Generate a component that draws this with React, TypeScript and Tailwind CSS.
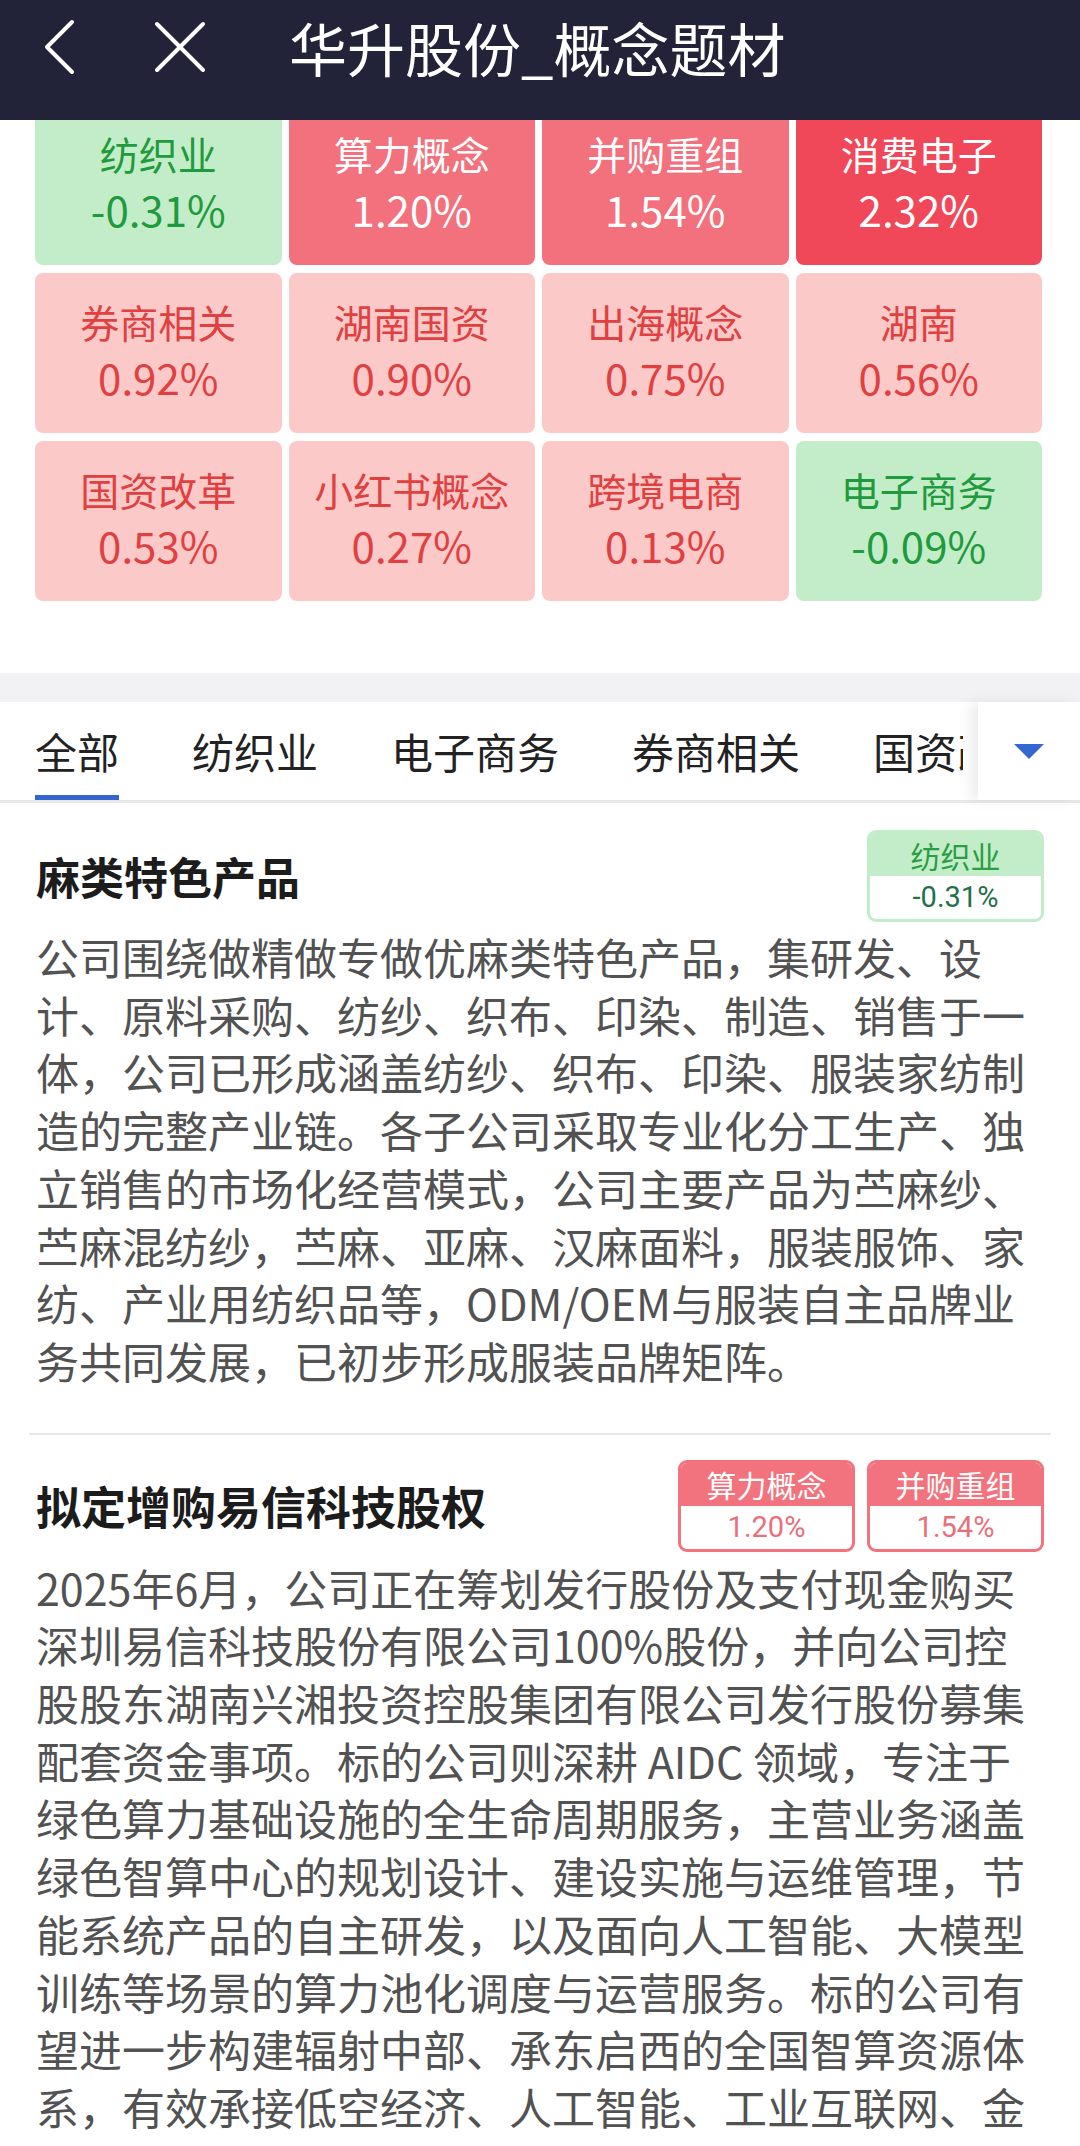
import React from "react";

type Kind = "g" | "m" | "s" | "l";

const tileStyle: Record<Kind, string> = {
  g: "bg-[#c2edc8] text-[#1f9a3c]",
  m: "bg-[#f2717d] text-white",
  s: "bg-[#f04858] text-white",
  l: "bg-[#fcc9c9] text-[#e0403f]",
};

const tiles: { n: string; p: string; k: Kind }[] = [
  { n: "纺织业", p: "-0.31%", k: "g" },
  { n: "算力概念", p: "1.20%", k: "m" },
  { n: "并购重组", p: "1.54%", k: "m" },
  { n: "消费电子", p: "2.32%", k: "s" },
  { n: "券商相关", p: "0.92%", k: "l" },
  { n: "湖南国资", p: "0.90%", k: "l" },
  { n: "出海概念", p: "0.75%", k: "l" },
  { n: "湖南", p: "0.56%", k: "l" },
  { n: "国资改革", p: "0.53%", k: "l" },
  { n: "小红书概念", p: "0.27%", k: "l" },
  { n: "跨境电商", p: "0.13%", k: "l" },
  { n: "电子商务", p: "-0.09%", k: "g" },
];

const tabs = ["全部", "纺织业", "电子商务", "券商相关", "国资改革", "湖南国资", "出海概念"];

function Badge({ n, p, green }: { n: string; p: string; green?: boolean }) {
  return (
    <div
      className={
        green
          ? "flex h-[92px] w-[177px] flex-col overflow-hidden rounded-[9px] border-[3px] border-[#c2edc8] bg-white"
          : "flex h-[92px] w-[177px] flex-col overflow-hidden rounded-[9px] border-[3px] border-[#f2737e] bg-white"
      }
    >
      <div
        className={
          green
            ? "flex h-[43px] items-center justify-center bg-[#c2edc8] text-[30px] leading-none text-[#2a9d45]"
            : "flex h-[43px] items-center justify-center bg-[#f2737e] text-[30px] leading-none text-white"
        }
      >
        {n}
      </div>
      <div
        className={
          green
            ? "flex flex-1 items-center justify-center font-['Roboto',sans-serif] text-[29px] leading-none text-[#236f4b]"
            : "flex flex-1 items-center justify-center font-['Roboto',sans-serif] text-[29px] leading-none text-[#e8707a]"
        }
      >
        {p}
      </div>
    </div>
  );
}

export default function App() {
  return (
    <div className="h-[2146px] w-[1080px] overflow-hidden bg-white font-['Noto_Sans_CJK_SC','Noto_Sans',sans-serif]">
      {/* Header */}
      <div className="relative z-10 h-[120px] bg-[#222338]">
        <div className="flex h-[94px] items-center">
          <svg className="ml-[41px]" width="36" height="60" viewBox="0 0 36 60" fill="none">
            <path d="M31 5 L6 30 L31 55" stroke="white" strokeWidth="4" strokeLinecap="round" strokeLinejoin="round" />
          </svg>
          <svg className="ml-[76px]" width="54" height="54" viewBox="0 0 54 54" fill="none">
            <path d="M4 4 L50 50 M50 4 L4 50" stroke="white" strokeWidth="4" strokeLinecap="round" />
          </svg>
          <div className="ml-[82px] text-[58px] leading-none text-white">华升股份_概念题材</div>
        </div>
      </div>

      {/* Concept tiles */}
      <div className="mt-[-15px] grid grid-cols-4 gap-x-[7px] gap-y-[8px] pl-[35px] pr-[38px]">
        {tiles.map((t) => (
          <div
            key={t.n}
            className={`flex h-[160px] flex-col items-center justify-center rounded-[8px] pb-[8px] ${tileStyle[t.k]}`}
          >
            <div className="text-[39px] leading-[56px]">{t.n}</div>
            <div className="text-[42px] leading-[56px]">{t.p}</div>
          </div>
        ))}
      </div>

      <div className="h-[72px]" />
      <div className="h-[29px] bg-[#f2f2f4]" />

      {/* Tabs */}
      <div className="flex h-[101px] border-b-[3px] border-[#e9e9e9]">
        <div className="flex-1 overflow-hidden">
          <div className="flex h-full gap-[73px] whitespace-nowrap pl-[35px]">
            {tabs.map((t, i) => (
              <div key={t} className="relative flex h-full shrink-0 items-center text-[42px] leading-none text-[#222222]">
                {t}
                {i === 0 && <div className="absolute bottom-[-3px] left-0 right-0 h-[8px] bg-[#3366cc]" />}
              </div>
            ))}
          </div>
        </div>
        <div className="ml-[15px] flex h-full w-[102px] items-center justify-center bg-white shadow-[-8px_0_12px_rgba(0,0,0,0.07)]">
          <svg width="30" height="15" viewBox="0 0 30 15">
            <path d="M0 0 L30 0 L15 15 Z" fill="#3467d0" />
          </svg>
        </div>
      </div>

      {/* Section 1 */}
      <div className="px-[36px] pt-[27px]">
        <div className="flex h-[92px] items-center justify-between">
          <div className="text-[44px] font-bold leading-none text-[#1c1c1c]">麻类特色产品</div>
          <Badge n="纺织业" p="-0.31%" green />
        </div>
        <p className="mt-[6px] pr-[8px] text-[43px] leading-[57.7px] text-[#525252]">
          公司围绕做精做专做优麻类特色产品，集研发、设计、原料采购、纺纱、织布、印染、制造、销售于一体，公司已形成涵盖纺纱、织布、印染、服装家纺制造的完整产业链。各子公司采取专业化分工生产、独立销售的市场化经营模式，公司主要产品为苎麻纱、苎麻混纺纱，苎麻、亚麻、汉麻面料，服装服饰、家纺、产业用纺织品等，ODM/OEM与服装自主品牌业务共同发展，已初步形成服装品牌矩阵。
        </p>
      </div>

      <div className="mx-[29px] mt-[43px] h-[2px] bg-[#e8e8e8]" />

      {/* Section 2 */}
      <div className="px-[36px] pt-[25px]">
        <div className="flex h-[92px] items-center justify-between">
          <div className="text-[45px] font-bold leading-none text-[#1c1c1c]">拟定增购易信科技股权</div>
          <div className="flex gap-[12px]">
            <Badge n="算力概念" p="1.20%" />
            <Badge n="并购重组" p="1.54%" />
          </div>
        </div>
        <p className="mt-[7px] pr-[8px] text-[43px] leading-[57.7px] text-[#525252]">
          2025年6月，公司正在筹划发行股份及支付现金购买深圳易信科技股份有限公司100%股份，并向公司控股股东湖南兴湘投资控股集团有限公司发行股份募集配套资金事项。标的公司则深耕 AIDC 领域，专注于绿色算力基础设施的全生命周期服务，主营业务涵盖绿色智算中心的规划设计、建设实施与运维管理，节能系统产品的自主研发，以及面向人工智能、大模型训练等场景的算力池化调度与运营服务。标的公司有望进一步构建辐射中部、承东启西的全国智算资源体系，有效承接低空经济、人工智能、工业互联网、金融科技等领域的算力需求。
        </p>
      </div>
    </div>
  );
}
